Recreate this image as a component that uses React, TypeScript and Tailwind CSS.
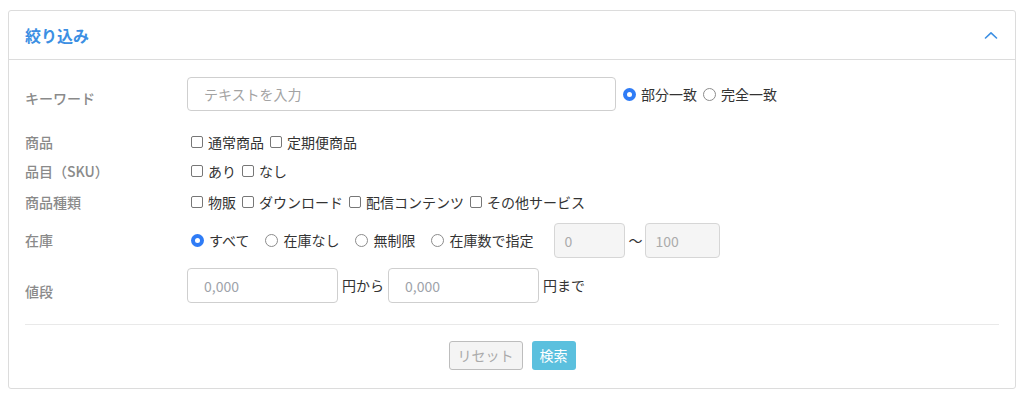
import type { ReactNode } from 'react'

const font = { fontFamily: '"Noto Sans CJK JP", "Noto Sans", sans-serif' }

function Radio({ checked, children }: { checked?: boolean; children: ReactNode }) {
  return (
    <label className="flex items-center gap-[5px] text-[14px] text-[#333]">
      {checked ? (
        <span className="w-[13px] h-[13px] rounded-full bg-[#2f7cf6] flex items-center justify-center">
          <span className="w-[5px] h-[5px] rounded-full bg-white" />
        </span>
      ) : (
        <span className="w-[13px] h-[13px] rounded-full border border-[#8c8c8c] bg-white" />
      )}
      <span>{children}</span>
    </label>
  )
}

function Check({ children }: { children: ReactNode }) {
  return (
    <label className="flex items-center gap-[5px] text-[14px] text-[#333]">
      <span className="w-[12px] h-[12px] rounded-[2px] border border-[#777] bg-white" />
      <span>{children}</span>
    </label>
  )
}

function Label({ children, className = '' }: { children: ReactNode; className?: string }) {
  return <div className={`w-[162px] shrink-0 text-[14px] font-medium text-[#8a8a8a] ${className}`}>{children}</div>
}

export default function App() {
  return (
    <div className="w-[1024px] h-[396px] bg-white pt-[10px] pl-[8px]" style={font}>
      <div className="w-[1008px] h-[379px] border border-[#dcdcdc] rounded-[3px] flex flex-col">
        <div className="h-[49px] shrink-0 border-b border-[#dcdcdc] flex items-center justify-between pl-[16px] pr-[16px]">
          <span className="text-[16px] font-bold text-[#3c8fe3]">絞り込み</span>
          <svg width="14" height="8" viewBox="0 0 14 8" fill="none" className="mr-[1px]">
            <path d="M1.5 7 L7 1.8 L12.5 7" stroke="#3c8fe3" strokeWidth="1.6" strokeLinecap="round" strokeLinejoin="round" />
          </svg>
        </div>
        <div className="px-[16px] flex flex-col">
          <div className="mt-[17px] h-[34px] flex items-center">
            <Label className="pt-[8px]">キーワード</Label>
            <input placeholder="テキストを入力" className="w-[429px] h-[34px] border border-[#cfcfcf] rounded-[4px] pl-[16px] text-[14px] placeholder:text-[#a3a3a3] outline-none" />
            <div className="flex items-center gap-[6px] ml-[7px]">
              <Radio checked>部分一致</Radio>
              <Radio>完全一致</Radio>
            </div>
          </div>
          <div className="mt-[21px] h-[20px] flex items-center">
            <Label>商品</Label>
            <div className="flex items-center gap-[6px] ml-[4px]">
              <Check>通常商品</Check>
              <Check>定期便商品</Check>
            </div>
          </div>
          <div className="mt-[9px] h-[20px] flex items-center">
            <Label>品目（SKU）</Label>
            <div className="flex items-center gap-[6px] ml-[4px]">
              <Check>あり</Check>
              <Check>なし</Check>
            </div>
          </div>
          <div className="mt-[11px] h-[20px] flex items-center">
            <Label>商品種類</Label>
            <div className="flex items-center gap-[6px] ml-[4px]">
              <Check>物販</Check>
              <Check>ダウンロード</Check>
              <Check>配信コンテンツ</Check>
              <Check>その他サービス</Check>
            </div>
          </div>
          <div className="mt-[11px] h-[35px] flex items-center">
            <Label>在庫</Label>
            <div className="flex items-center gap-[16px] ml-[4px]">
              <Radio checked>すべて</Radio>
              <Radio>在庫なし</Radio>
              <Radio>無制限</Radio>
              <Radio>在庫数で指定</Radio>
            </div>
            <input disabled placeholder="0" className="ml-[21px] w-[71px] h-[35px] border border-[#d6d6d6] bg-[#f5f5f5] rounded-[4px] pl-[9px] text-[14px] placeholder:text-[#ababab]" />
            <span className="mx-[3px] text-[14px] text-[#333]">〜</span>
            <input disabled placeholder="100" className="w-[75px] h-[35px] border border-[#d6d6d6] bg-[#f5f5f5] rounded-[4px] pl-[9px] text-[14px] placeholder:text-[#ababab]" />
          </div>
          <div className="mt-[10px] h-[35px] flex items-center">
            <Label className="pt-[12px]">値段</Label>
            <input placeholder="0,000" className="w-[151px] h-[35px] border border-[#cfcfcf] rounded-[4px] pl-[16px] text-[14px] placeholder:text-[#9ea3aa] outline-none" />
            <span className="mx-[4px] text-[14px] text-[#333]">円から</span>
            <input placeholder="0,000" className="w-[151px] h-[35px] border border-[#cfcfcf] rounded-[4px] pl-[16px] text-[14px] placeholder:text-[#9ea3aa] outline-none" />
            <span className="ml-[4px] text-[14px] text-[#333]">円まで</span>
          </div>
          <div className="mt-[21px] border-t border-[#e9e9e9]" />
          <div className="mt-[16px] flex justify-center gap-[9px]">
            <button className="w-[74px] h-[29px] border border-[#bdbdbd] bg-[#f4f4f4] rounded-[3px] text-[14px] text-[#aaaaaa]">リセット</button>
            <button className="w-[44px] h-[29px] bg-[#5bc0de] rounded-[3px] text-[14px] text-white">検索</button>
          </div>
        </div>
      </div>
    </div>
  )
}
